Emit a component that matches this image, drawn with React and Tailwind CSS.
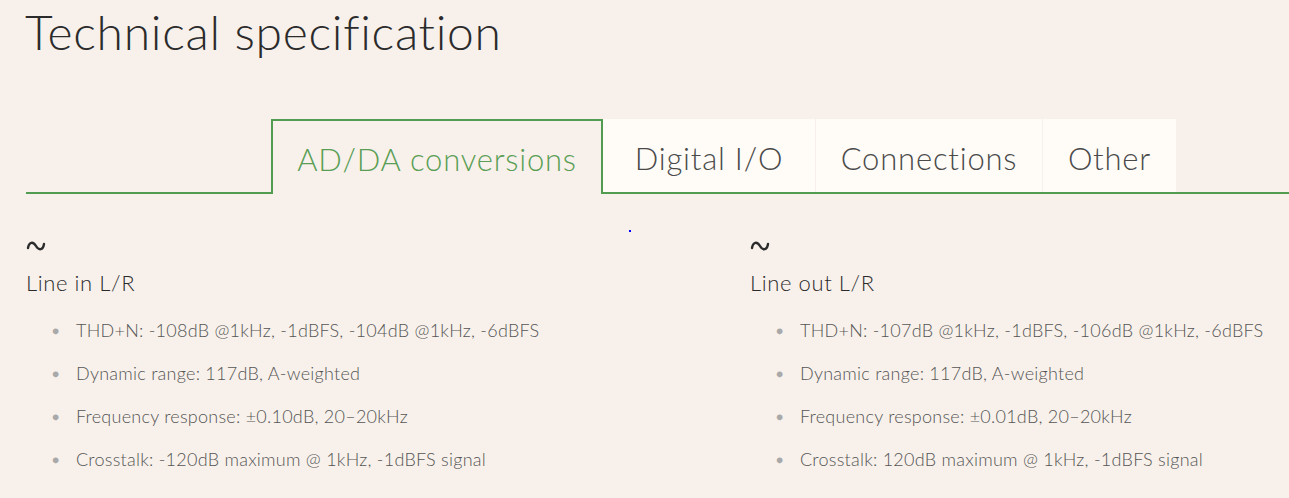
import React from 'react';

const tabs = ['AD/DA conversions', 'Digital I/O', 'Connections', 'Other'];

const columns = [
    {
        title: 'Line in L/R',
        items: [
            'THD+N: -108dB @1kHz, -1dBFS, -104dB @1kHz, -6dBFS',
            'Dynamic range: 117dB, A-weighted',
            'Frequency response: ±0.10dB, 20–20kHz',
            'Crosstalk: -120dB maximum @ 1kHz, -1dBFS signal',
        ],
    },
    {
        title: 'Line out L/R',
        items: [
            'THD+N: -107dB @1kHz, -1dBFS, -106dB @1kHz, -6dBFS',
            'Dynamic range: 117dB, A-weighted',
            'Frequency response: ±0.01dB, 20–20kHz',
            'Crosstalk: 120dB maximum @ 1kHz, -1dBFS signal',
        ],
    },
];

// little sine wave mark above each column
const Wave = () => (
    <svg width="20" height="14" viewBox="0 0 20 14" className="block">
        <path d="M2 9 C3 3, 7 2, 10 7 C13 12, 17 11, 18 5" fill="none" stroke="#2b2b2b" strokeWidth="2.4" strokeLinecap="round" />
    </svg>
);

const App = () => {
    return (
        <div className="min-h-[498px] bg-[#f8f1eb] font-['Lato','Open_Sans',sans-serif] text-[#2b2b2b] overflow-hidden">
            <h1 className="pl-[25px] pt-[4px] text-[48px] font-light leading-[56px] tracking-[0.7px]">
                Technical specification
            </h1>

            {/* Tabs */}
            <div className="mt-[59px] ml-[26px] flex border-b-2 border-[#529c52] h-[75px] pl-[245px]">
                {tabs.map((tab, i) => (
                    i === 0 ? (
                        <div
                            key={tab}
                            className="-mb-[2px] h-[75px] w-[332px] border-2 border-b-0 border-[#529c52] bg-[#f8f1eb] flex items-center justify-center pt-[4px] text-[31px] font-light text-[#5a9e55] tracking-[0.8px]"
                        >
                            {tab}
                        </div>
                    ) : (
                        <div
                            key={tab}
                            className={`h-[73px] bg-[#fffcf8] flex items-center justify-center pt-[6px] text-[31px] font-light text-[#4a4a4a] tracking-[0.8px] ${i === 1 ? 'w-[212px]' : i === 2 ? 'w-[226px] ml-[1px]' : 'w-[133px] ml-[1px]'}`}
                        >
                            {tab}
                        </div>
                    )
                ))}
            </div>

            <div className="relative">
                <span className="absolute left-[629px] top-[36px] w-[2px] h-[2px] bg-[#0000ff]" />
            </div>

            {/* Columns */}
            <div className="grid grid-cols-[724px_1fr] pl-[26px] pt-[45px]">
                {columns.map(col => (
                    <div key={col.title}>
                        <Wave />
                        <h3 className="mt-[16px] text-[22px] font-light leading-[28px] tracking-[0.6px]">{col.title}</h3>
                        <ul className="mt-[12px] pl-[26px]">
                            {col.items.map(item => (
                                <li key={item} className="flex items-center h-[43px] text-[18px] font-light text-[#555555] tracking-[0.25px]">
                                    <span className="w-[24px] text-[#a9a9a9] text-[12px]">●</span>
                                    {item}
                                </li>
                            ))}
                        </ul>
                    </div>
                ))}
            </div>
        </div>
    );
};

export default App;
